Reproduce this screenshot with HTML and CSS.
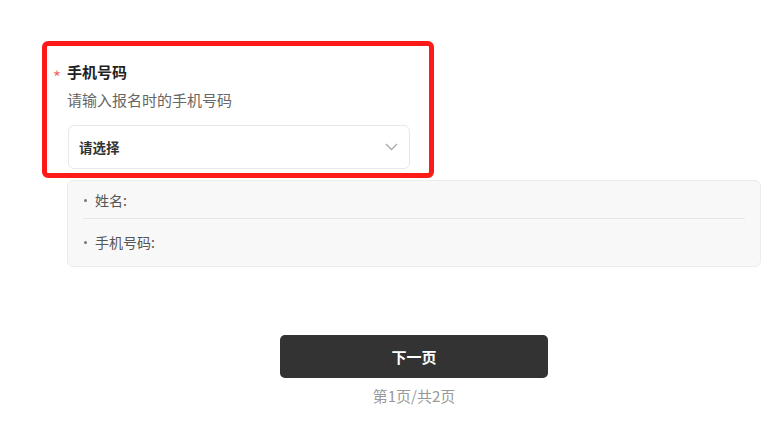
FILE: index.html
```html
<!DOCTYPE html>
<html lang="zh">
<head>
<meta charset="utf-8">
<link rel="stylesheet" href="styles.css">
</head>
<body>
<div class="page">
  <div class="field">
    <div class="title"><span class="req">*</span>手机号码</div>
    <div class="desc">请输入报名时的手机号码</div>
    <div class="select">
      <span class="select-text">请选择</span>
      <svg class="chev" width="13" height="8" viewBox="0 0 13 8"><path d="M1 1l5.5 5.5L12 1" fill="none" stroke="#aaa" stroke-width="1.4"/></svg>
    </div>
    <div class="highlight"></div>
  </div>
  <div class="info">
    <div class="row row1"><span class="dot"></span>姓名:</div>
    <div class="divider"></div>
    <div class="row row2"><span class="dot"></span>手机号码:</div>
  </div>
  <div class="actions">
    <button class="next">下一页</button>
    <div class="pager">第1页/共2页</div>
  </div>
</div>
</body>
</html>
```
FILE: styles.css
```css
* { box-sizing: border-box; }
body {
  margin: 0;
  background: #fff;
  font-family: "Noto Sans CJK SC", "Noto Sans", sans-serif;
}
.page {
  padding: 62px 19px 0 67px;
}
.field {
  position: relative;
}
.title {
  position: relative;
  font-size: 15px;
  line-height: 20px;
  font-weight: 700;
  color: #222;
}
.req {
  position: absolute;
  left: -14px;
  top: 7px;
  color: #f56c6c;
  font-size: 17px;
  line-height: 16px;
  font-weight: 400;
}
.desc {
  margin-top: 8px;
  font-size: 15px;
  line-height: 20px;
  color: #666;
}
.select {
  margin-top: 15px;
  margin-left: 1px;
  width: 342px;
  height: 44px;
  border: 1px solid #e8e8e8;
  border-radius: 6px;
  display: flex;
  align-items: center;
  justify-content: space-between;
  padding: 0 11px 0 10px;
}
.select-text {
  font-size: 13.5px;
  font-weight: 700;
  color: #333;
}
.highlight {
  position: absolute;
  left: -25px;
  top: -21px;
  width: 392px;
  height: 137px;
  border: 5px solid #ff1a1a;
  border-radius: 6px;
  pointer-events: none;
}
.info {
  margin-top: 11px;
  background: #f8f8f8;
  border: 1px solid #ececec;
  border-radius: 6px;
  padding: 0 15px;
}
.row {
  font-size: 14px;
  line-height: 22px;
  color: #555;
  display: flex;
  align-items: center;
}
.row1 { padding: 8px 0 7px; }
.row2 { padding: 12px 0 13px; }
.dot {
  width: 3px;
  height: 3px;
  background: #777;
  border-radius: 50%;
  margin: 0 8px 0 1px;
}
.divider {
  height: 1px;
  background: #e6e6e6;
}
.actions {
  display: flex;
  flex-direction: column;
  align-items: center;
  margin-top: 68px;
}
.next {
  width: 268px;
  height: 43px;
  border: none;
  border-radius: 5px;
  background: #333;
  color: #fff;
  font-family: inherit;
  font-size: 15px;
  font-weight: 700;
}
.pager {
  margin-top: 8px;
  font-size: 15px;
  line-height: 20px;
  color: #999;
}
```
